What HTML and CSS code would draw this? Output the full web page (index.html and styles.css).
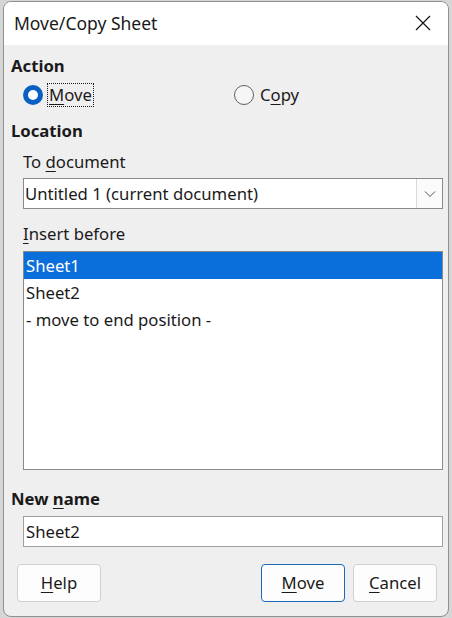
FILE: index.html
```html
<!DOCTYPE html>
<html>
<head>
<meta charset="utf-8">
<link rel="stylesheet" href="styles.css">
</head>
<body>
<div class="window">
  <div class="titlebar">
    <span class="title">Move/Copy Sheet</span>
    <svg class="close" width="16" height="16" viewBox="0 0 16 16"><path d="M1 1 L15 15 M15 1 L1 15" stroke="#1a1a1a" stroke-width="1.3" fill="none"/></svg>
  </div>
  <div class="content">
    <div class="section-label l-action">Action</div>
    <div class="radios">
      <div class="radio-item r-move">
        <span class="radio checked"></span>
        <span class="radio-text focused"><u>M</u>ove</span>
      </div>
      <div class="radio-item r-copy">
        <span class="radio"></span>
        <span class="radio-text">C<u>o</u>py</span>
      </div>
    </div>
    <div class="section-label l-location">Location</div>
    <div class="sub-label l-todoc">To <u>d</u>ocument</div>
    <div class="combo">
      <span class="combo-text">Untitled 1 (current document)</span>
      <span class="combo-btn"><svg width="12" height="8" viewBox="0 0 12 8"><path d="M1 1.5 L6 6.5 L11 1.5" stroke="#555" stroke-width="1" fill="none"/></svg></span>
    </div>
    <div class="sub-label l-insert"><u>I</u>nsert before</div>
    <div class="list">
      <div class="row selected">Sheet1</div>
      <div class="row">Sheet2</div>
      <div class="row">- move to end position -</div>
    </div>
    <div class="section-label l-newname">New <u>n</u>ame</div>
    <div class="input">Sheet2</div>
    <div class="buttons">
      <span class="btn"><u>H</u>elp</span>
      <span class="spacer"></span>
      <span class="btn default"><u>M</u>ove</span>
      <span class="btn"><u>C</u>ancel</span>
    </div>
  </div>
</div>
</body>
</html>
```
FILE: styles.css
```css
html, body {
  margin: 0;
  padding: 0;
}
body {
  width: 452px;
  height: 618px;
  background: #d6d6d6;
  font-family: "Noto Sans", "Open Sans", sans-serif;
  font-size: 16.7px;
  color: #1a1a1a;
  overflow: hidden;
}
u {
  text-decoration: underline;
  text-underline-offset: 3px;
  text-decoration-thickness: 1px;
}
.window {
  box-sizing: border-box;
  margin: 1px 0 0 3px;
  width: 446px;
  height: 616px;
  border: 1px solid #8f8f8f;
  border-radius: 8px;
  overflow: hidden;
  background: #f0eff0;
  display: flex;
  flex-direction: column;
}
.titlebar {
  height: 43px;
  background: #ffffff;
  display: flex;
  align-items: center;
  padding: 0 17px 0 10px;
  flex: none;
}
.title {
  flex: 1;
  font-size: 17.5px;
  line-height: 22px;
  position: relative;
  top: -1px;
}
.close {
  display: block;
  position: relative;
  top: -1px;
}
.content {
  display: flex;
  flex-direction: column;
  padding: 0 5px 0 7px;
}
.section-label {
  font-weight: bold;
  line-height: 22px;
  height: 22px;
}
.l-action { margin-top: 10px; }
.l-location { margin-top: 13px; }
.l-newname { margin-top: 18px; }
.radios {
  margin-top: 6px;
  height: 24px;
  display: flex;
  padding-left: 12px;
}
.radio-item {
  display: flex;
  align-items: center;
  gap: 4px;
}
.r-move { width: 211px; }
.radio {
  box-sizing: border-box;
  width: 20px;
  height: 20px;
  border-radius: 50%;
  border: 1px solid #5f5f5f;
  background: #f6f6f6;
}
.radio.checked {
  border: 5px solid #0a5fc2;
  background: #ffffff;
}
.radio-text {
  line-height: 22px;
  padding: 0 1px;
  border: 1px dotted transparent;
}
.radio-text.focused {
  border-color: #1a1a1a;
}
.sub-label {
  line-height: 22px;
  height: 22px;
  padding-left: 12px;
}
.l-todoc { margin-top: 9px; }
.l-insert { margin-top: 14px; }
.combo {
  margin-top: 5px;
  margin-left: 12px;
  box-sizing: border-box;
  height: 31px;
  border: 1px solid #8a8a8a;
  background: #ffffff;
  display: flex;
  align-items: center;
}
.combo-text {
  flex: 1;
  padding-left: 1px;
  line-height: 22px;
}
.combo-btn {
  box-sizing: border-box;
  width: 26px;
  height: 29px;
  border-left: 1px solid #d9d9d9;
  background: #fbfbfb;
  display: flex;
  align-items: center;
  justify-content: center;
}
.list {
  margin-top: 6px;
  margin-left: 12px;
  box-sizing: border-box;
  height: 219px;
  border: 1px solid #8a8a8a;
  background: #ffffff;
}
.row {
  height: 27px;
  line-height: 27px;
  padding-left: 2px;
}
.row.selected {
  background: #0b6fdb;
  color: #ffffff;
}
.input {
  margin-top: 6px;
  margin-left: 12px;
  box-sizing: border-box;
  height: 31px;
  line-height: 29px;
  border: 1px solid #a0a0a0;
  background: #ffffff;
  padding-left: 2px;
}
.buttons {
  margin-top: 17px;
  display: flex;
  gap: 8px;
  padding: 0 6px 0 6px;
}
.spacer { flex: 1; }
.btn {
  box-sizing: border-box;
  width: 84px;
  height: 38px;
  border: 1px solid #d0d0d0;
  border-radius: 4px;
  background: #fdfdfd;
  display: flex;
  align-items: center;
  justify-content: center;
  line-height: 22px;
}
.btn.default {
  border-color: #1a6ab8;
}
```
